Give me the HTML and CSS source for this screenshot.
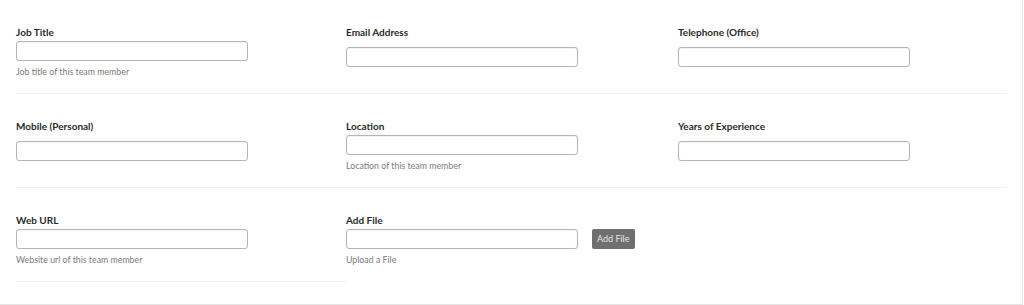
FILE: index.html
```html
<!DOCTYPE html>
<html>
<head>
<meta charset="utf-8">
<link rel="stylesheet" href="styles.css">
</head>
<body>
<div class="panel">
  <div class="grid">
    <div class="field has-help">
      <label class="label">Job Title</label>
      <input class="input" type="text">
      <div class="help">Job title of this team member</div>
    </div>
    <div class="field">
      <label class="label">Email Address</label>
      <input class="input" type="text">
    </div>
    <div class="field">
      <label class="label">Telephone (Office)</label>
      <input class="input" type="text">
    </div>

    <div class="field">
      <label class="label">Mobile (Personal)</label>
      <input class="input" type="text">
    </div>
    <div class="field has-help">
      <label class="label">Location</label>
      <input class="input" type="text">
      <div class="help">Location of this team member</div>
    </div>
    <div class="field">
      <label class="label">Years of Experience</label>
      <input class="input" type="text">
    </div>

    <div class="field has-help">
      <label class="label">Web URL</label>
      <input class="input" type="text">
      <div class="help">Website url of this team member</div>
    </div>
    <div class="field has-help last">
      <label class="label">Add File</label>
      <div class="file-row">
        <input class="input" type="text">
        <button class="btn" type="button">Add File</button>
      </div>
      <div class="help">Upload a File</div>
    </div>
    <div class="empty"></div>
  </div>
</div>
</body>
</html>
```

FILE: styles.css
```css
html, body {
  margin: 0;
  padding: 0;
  background: #ffffff;
}

body {
  font-family: "Lato", "Open Sans", sans-serif;
  color: #222;
}

.panel {
  box-sizing: border-box;
  width: 1023px;
  height: 305px;
  border-right: 1px solid #e4e4e4;
  border-bottom: 1px solid #e4e4e4;
  padding-left: 16px;
}

.grid {
  width: 991px;
  display: grid;
  grid-template-columns: 330px 332px 329px;
}

.field {
  box-sizing: border-box;
  padding: 24px 0 14px 0;
  min-height: 94px;
  border-bottom: 1px solid #f1f1f1;
}

.field.last {
  border-bottom-color: transparent;
}

.label {
  display: block;
  font-size: 10px;
  font-weight: 700;
  line-height: 16px;
  color: #2a2a2a;
}

.input {
  display: block;
  box-sizing: border-box;
  width: 232px;
  height: 20px;
  margin: 7px 0 0 0;
  padding: 0 4px;
  border: 1px solid #b4b4b4;
  border-radius: 3px;
  background: #fff;
  box-shadow: inset 0 1px 1px rgba(0,0,0,0.05);
}

.has-help .input {
  margin-top: 1px;
}

.help {
  margin-top: 5px;
  font-size: 8.8px;
  line-height: 12px;
  color: #7a7a7a;
}

.file-row {
  display: flex;
  align-items: center;
  gap: 14px;
}

.file-row .input {
  margin-top: 1px;
}

.btn {
  margin-top: 1px;
  height: 20px;
  padding: 0 5px;
  border: none;
  border-radius: 2px;
  background: #6f6f6f;
  color: #e6e6e6;
  font-family: "Lato", "Open Sans", sans-serif;
  font-size: 9px;
  line-height: 20px;
}
```
